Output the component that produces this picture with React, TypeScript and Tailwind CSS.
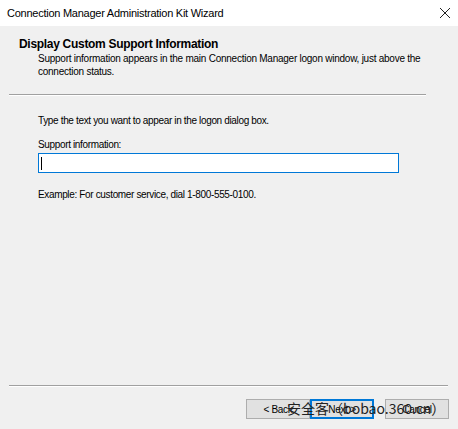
import React from "react";

const ui = { fontFamily: '"Liberation Sans", Arial, sans-serif' };

function WizardButton({ label, focused }: { label: string; focused?: boolean }) {
  return (
    <div
      className={
        "flex h-[20px] w-[64px] items-center justify-center bg-[#e1e1e1] text-[10px] tracking-[-0.3px] text-black " +
        (focused ? "border-2 border-[#0078d7]" : "border border-[#adadad]")
      }
    >
      {label}
    </div>
  );
}

export default function App() {
  return (
    <div className="relative flex h-[429px] w-[458px] flex-col bg-[#f0f0f0]" style={ui}>
      {/* title bar */}
      <div className="flex h-[26px] items-center justify-between bg-white pl-[7px] pr-[6px]">
        <span className="text-[11px] tracking-[-0.25px] text-black">
          Connection Manager Administration Kit Wizard
        </span>
        <svg width="12" height="12" viewBox="0 0 12 12" className="mr-[1px]">
          <path d="M1 1 L11 11 M11 1 L1 11" stroke="#222" strokeWidth="1" />
        </svg>
      </div>

      {/* page header */}
      <div className="flex flex-col pl-[19px] pt-[11px]">
        <div className="text-[12px] font-bold leading-[15px] tracking-[-0.3px] text-black">
          Display Custom Support Information
        </div>
        <div className="pl-[19px] pr-[30px] text-[10px] leading-[13px] tracking-[-0.25px] text-black">
          Support information appears in the main Connection Manager logon window, just above the
          connection status.
        </div>
      </div>

      <div className="ml-[9px] mr-[32px] mt-[16px] h-[2px] border-t border-b border-t-[#a0a0a0] border-b-white" />

      {/* page body */}
      <div className="flex flex-col pl-[38px] text-[10px] tracking-[-0.35px] text-black">
        <div className="mt-[18px] leading-[13px]">Type the text you want to appear in the logon dialog box.</div>
        <div className="mt-[11px] leading-[13px]">Support information:</div>
        <div className="mt-[2px] flex h-[20px] w-[361px] items-center border border-[#0078d7] bg-white pl-[2px]">
          <div className="h-[13px] w-px bg-black" />
        </div>
        <div className="mt-[15px] leading-[13px]">Example: For customer service, dial 1-800-555-0100.</div>
      </div>

      <div className="flex-1" />

      <div className="ml-[9px] mr-[10px] h-[2px] border-t border-b border-t-[#a0a0a0] border-b-white" />

      {/* buttons */}
      <div className="flex justify-end pb-[10px] pr-[9px] pt-[12px]">
        <WizardButton label="< Back" />
        <WizardButton label="Next >" focused />
        <div className="w-[11px]" />
        <WizardButton label="Cancel" />
      </div>

      <div
        className="pointer-events-none absolute left-[287px] top-[399px] text-[14px] leading-[18px] text-[#222]"
        style={{ fontFamily: '"Noto Sans CJK SC", sans-serif' }}
      >
        安全客（bobao.360.cn）
      </div>
    </div>
  );
}
